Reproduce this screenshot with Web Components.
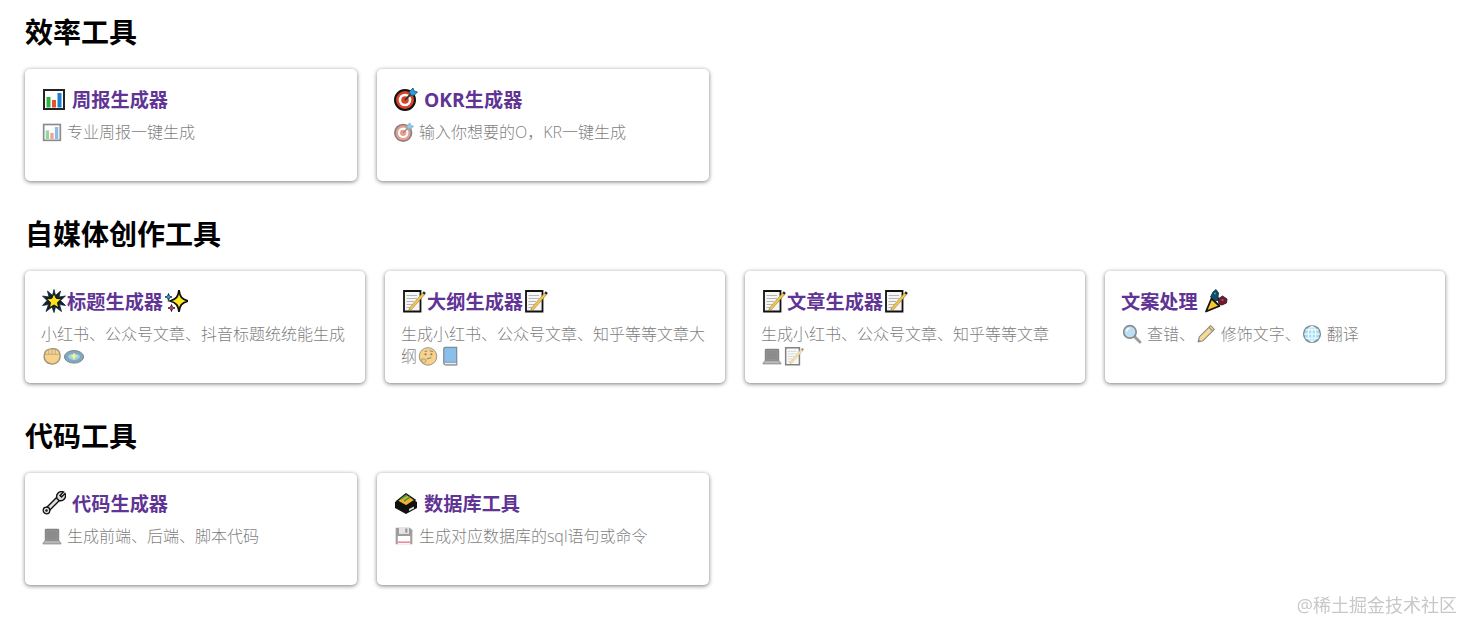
<!DOCTYPE html>
<html lang="zh">
<head>
<meta charset="utf-8">
<title>工具</title>
<style>
    html, body { margin: 0; background: #fff; }
    body { font-family: "Open Sans", "Noto Sans CJK SC", sans-serif; overflow: hidden; height: 622px; }
</style>
</head>
<body>
<tool-page>
    <tool-section title="效率工具" card-width="332px">
        <tool-card>
            <span slot="title"><tool-icon name="chart"></tool-icon> 周报生成器</span>
            <tool-icon name="chart"></tool-icon> 专业周报一键生成
        </tool-card>
        <tool-card>
            <span slot="title"><tool-icon name="target"></tool-icon> OKR生成器</span>
            <tool-icon name="target"></tool-icon> 输入你想要的O，KR一键生成
        </tool-card>
    </tool-section>
    <tool-section title="自媒体创作工具" card-width="340px">
        <tool-card>
            <span slot="title"><tool-icon name="star"></tool-icon>标题生成器<tool-icon name="sparkles"></tool-icon></span>
            小红书、公众号文章、抖音标题统统能生成<tool-icon name="fist"></tool-icon><tool-icon name="galaxy"></tool-icon>
        </tool-card>
        <tool-card>
            <span slot="title"><tool-icon name="memo"></tool-icon>大纲生成器<tool-icon name="memo"></tool-icon></span>
            生成小红书、公众号文章、知乎等等文章大纲<tool-icon name="thinking"></tool-icon><tool-icon name="book"></tool-icon>
        </tool-card>
        <tool-card>
            <span slot="title"><tool-icon name="memo"></tool-icon>文章生成器<tool-icon name="memo"></tool-icon></span>
            生成小红书、公众号文章、知乎等等文章 <tool-icon name="laptop"></tool-icon><tool-icon name="memo"></tool-icon>
        </tool-card>
        <tool-card>
            <span slot="title">文案处理 <tool-icon name="party"></tool-icon></span>
            <tool-icon name="search"></tool-icon> 查错、<tool-icon name="pencil"></tool-icon> 修饰文字、<tool-icon name="globe"></tool-icon> 翻译
        </tool-card>
    </tool-section>
    <tool-section title="代码工具" card-width="332px">
        <tool-card>
            <span slot="title"><tool-icon name="wrench"></tool-icon> 代码生成器</span>
            <tool-icon name="laptop"></tool-icon> 生成前端、后端、脚本代码
        </tool-card>
        <tool-card>
            <span slot="title"><tool-icon name="box"></tool-icon> 数据库工具</span>
            <tool-icon name="floppy"></tool-icon> 生成对应数据库的sql语句或命令
        </tool-card>
    </tool-section>
</tool-page>
<water-mark>@稀土掘金技术社区</water-mark>

<script>
const ICONS = {
    chart: `<rect x="2" y="3" width="20" height="19" fill="#fff" stroke="#222" stroke-width="2"/>
            <rect x="4.5" y="10" width="4" height="10.5" fill="#2fb344"/><rect x="10" y="13" width="4" height="7.5" fill="#e8512f"/><rect x="15.5" y="6" width="4" height="14.5" fill="#1f7fd0"/>`,
    target: `<circle cx="11" cy="13" r="10" fill="#d8432a" stroke="#111" stroke-width="2"/>
            <circle cx="11" cy="13" r="6.3" fill="#fff"/><circle cx="11" cy="13" r="3.8" fill="#d8432a"/>
            <path d="M11 13 19 5" stroke="#333" stroke-width="1.800"/><path d="M15.500 4.500 19 1 20 4 23.500 5 20 8.500 16.500 8Z" fill="#2a9fe0" stroke="#14506f" stroke-width=".8"/>`,
    star: `<path d="M12 .5 13.500 6.500 18.500 2 17 8 23.500 7 18.500 11.500 23.500 16.500 17.500 15.500 19.500 22.500 13.500 18 12 23.500 10 18 4 22.500 6.500 15.500 .5 16.500 5 11.500 .5 7 7 8 5.500 2 10.500 6.500Z" fill="#123" stroke="#0d2a2e" stroke-width=".8"/>
            <path d="M12 4.500 14.200 9.300 19.500 10 15.500 13.500 16.600 18.800 12 16 7.400 18.800 8.500 13.500 4.500 10 9.800 9.300Z" fill="#ffe11a" stroke="#111" stroke-width="1"/>`,
    sparkles: `<path d="M15 1C16 8 17.500 10 24 12 17.500 14 16 16 15 23 14 16 12.500 14 6 12 12.500 10 14 8 15 1Z" fill="#ffe81f" stroke="#111" stroke-width="1.700"/>
            <path d="M4.500 4.500C5 7 5.500 7.500 8 8 5.500 8.500 5 9 4.500 11.500 4 9 3.500 8.500 1 8 3.500 7.500 4 7 4.500 4.500Z" fill="#2aa7dc" stroke="#123" stroke-width=".9"/>
            <path d="M7.500 15.500C8 18 8.500 18.500 11 19 8.500 19.500 8 20 7.500 22.500 7 20 6.500 19.500 4 19 6.500 18.500 7 18 7.500 15.500Z" fill="#b5487e" stroke="#311" stroke-width=".9"/>`,
    memo: `<path d="M2 2H18.500V22.500H2Z" fill="#f5f5f5" stroke="#111" stroke-width="1.800"/>
            <path d="M4.500 6.500H15M4.500 9.500H15M4.500 12.500H12M4.500 15.500H10M4.500 18.500H8" stroke="#b5b5b5" stroke-width="1.200"/>
            <path d="M7.500 19 20.500 4 22.500 5.700 9.500 20.500 6.800 21.300Z" fill="#f4c64f" stroke="#8a6a20" stroke-width=".5"/>
            <path d="M20.500 4 21.800 2.300 23.800 4 22.500 5.700Z" fill="#222"/>`,
    party: `<path d="M2 22.500 7.500 9.500 15.500 17Z" fill="#f8c92d" stroke="#111" stroke-width="1.800" stroke-linejoin="round"/>
            <path d="M6.500 8 9 3 12 .5 14.500 4 14 8 16 11 11 12Z" fill="#0d4f66" stroke="#0a2730" stroke-width=".8"/>
            <path d="M14 10 18.500 7 23 10 22.500 14 18 16 15 15Z" fill="#6d1d33" stroke="#2a0a12" stroke-width=".8"/>
            <circle cx="11" cy="4.500" r="1" fill="#2aa7dc"/><circle cx="18.500" cy="11" r="1" fill="#d04a7a"/>`,
    search: `<path d="M14 14 21.500 21.500" stroke="#444" stroke-width="3.500" stroke-linecap="round"/>
            <circle cx="9.500" cy="9.500" r="7.500" fill="#7fc3ec" stroke="#222" stroke-width="2"/>
            <path d="M5.500 9A4.500 4.500 0 0 1 9 5" stroke="#fff" stroke-width="1.500" fill="none"/>`,
    pencil: `<path d="M2.500 21.500 4 15.500 17.500 2 22 6.500 8.500 20Z" fill="#f2b733" stroke="#222" stroke-width="1.300" stroke-linejoin="round"/>
            <path d="M15.500 4 20 8.500" stroke="#222" stroke-width="1.300"/><path d="M2.500 21.500 3.300 18.300 5.700 20.700Z" fill="#222"/>`,
    globe: `<circle cx="12" cy="12" r="10" fill="#4fc6ea" stroke="#123" stroke-width="1.800"/>
            <g fill="none" stroke="#fff" stroke-width="1.200"><ellipse cx="12" cy="12" rx="4.500" ry="9.500"/><path d="M12 2.500V21.500M2.500 12H21.500M4 7H20M4 17H20"/></g>`,
    wrench: `<path d="M4.500 19.500 17.500 6.500" stroke="#111" stroke-width="5.500" stroke-linecap="round"/>
            <path d="M4.500 19.500 17.500 6.500" stroke="#ddd" stroke-width="2.800" stroke-linecap="round"/>
            <path d="M23 2.500 19.500 6 18 4.500 21.500 1A5 5 0 0 0 15 7.500 L17 9.500A5 5 0 0 0 23 2.500Z" fill="#ddd" stroke="#111" stroke-width="1.400"/>
            <circle cx="4.500" cy="19.500" r="3.300" fill="#ddd" stroke="#111" stroke-width="1.300"/>
            <circle cx="4.500" cy="19.500" r="1.200" fill="#111"/>`,
    box: `<path d="M1 11 12 5 23 11V17L12 23 1 17Z" fill="#111"/>
            <path d="M3 10 12 3 21 9 12 15Z" fill="#f0b22c" stroke="#111" stroke-width="1.500"/>
            <path d="M7 8 13 4M10 10 16 6" stroke="#3f9e44" stroke-width="1.600"/><path d="M15 18 20 15.500V17.500L15 20Z" fill="#ddd"/>`,
    floppy: `<path d="M2 2H19L22 5V22H2Z" fill="#444"/><rect x="6" y="2" width="12" height="7.500" fill="#ccc"/>
            <rect x="13.500" y="3" width="2.500" height="5" fill="#333"/><rect x="4.500" y="12" width="15" height="10" fill="#fff"/><rect x="4.500" y="18.500" width="15" height="2" fill="#d91f44"/>`,
    laptop: `<rect x="4" y="4" width="16" height="13.500" rx="1" fill="#333" stroke="#111" stroke-width="1.300"/><rect x="5.800" y="5.800" width="12.400" height="10" fill="#222"/>
            <path d="M3.500 17.500H20.500L23 21.500H1Z" fill="#777" stroke="#222" stroke-width="1"/>`,
    fist: `<path d="M4 7C6 3 15 2.500 18.500 4.500 21.500 6.500 22.500 12 21 16 19.500 20 14.500 22 10.500 21.500 6 20.500 3 17.500 2.500 13 2.300 11 3 9 4 7Z" fill="#f2aa1f" stroke="#4a3208" stroke-width="1.700"/>
            <path d="M8 4.500V10M12 3.500V10M16 4V10M3.500 10H20" stroke="#7c5610" stroke-width="1" fill="none"/>`,
    galaxy: `<ellipse cx="12" cy="13" rx="11.500" ry="7.500" fill="#0f5a8a" stroke="#012" stroke-width="1.200"/>
            <ellipse cx="12" cy="13" rx="7" ry="3.800" fill="#47aacb"/><path d="M12 8 14 11 17 12 14 13 12 17 10 13 7 12 10 11Z" fill="#f7e02a"/>`,
    thinking: `<circle cx="12" cy="12.500" r="10.500" fill="#f2aa1f" stroke="#4a3208" stroke-width="1.200"/>
            <circle cx="9" cy="10" r="1.300" fill="#111"/><circle cx="16" cy="10" r="1.300" fill="#111"/>
            <path d="M8 6.500 11 6M14 5.500 18 7M10.500 15.500 16 14" stroke="#111" stroke-width="1.200" fill="none"/>
            <path d="M3.500 16C6 15 8.500 15.500 9.500 17 10 19 8 21.500 6 20.500Z" fill="#e89c18" stroke="#4a3208"/>`,
    book: `<path d="M4.500 3.500A2 2 0 0 1 6.500 1.500H20V22.500H6.500A2 2 0 0 1 4.500 20.500Z" fill="#1f86d8" stroke="#0d2438" stroke-width="1.500"/>
            <path d="M5 19.500H20V22.500H6.500" fill="#ddd" stroke="#0d2438"/>`
};

class ToolIcon extends HTMLElement {
    constructor() {
        super();
        const shadowRoot = this.attachShadow({ mode: 'open' });
        shadowRoot.innerHTML = `
            <style>
                :host { display: inline-block; width: 1.36em; height: 1.25em; vertical-align: -0.22em; }
                svg { display: block; width: 1.25em; height: 1.25em; margin-left: 1px; }
            </style>
            <svg viewBox="0 0 24 24" aria-hidden="true">${ICONS[this.getAttribute('name')]}</svg>
        `;
    }
}
window.customElements.define('tool-icon', ToolIcon);

class ToolCard extends HTMLElement {
    constructor() {
        super();
        const shadowRoot = this.attachShadow({ mode: 'open' });
        shadowRoot.innerHTML = `
            <style>
                :host {
                    display: block;
                    box-sizing: border-box;
                    height: 112px;
                    padding: 16px;
                    background: #fff;
                    border-radius: 5px;
                    box-shadow: 0 1px 4px rgba(0, 0, 0, .52);
                }
                .title { font-size: 19.2px; font-weight: 700; line-height: 29px; color: #603494; white-space: nowrap; }
                .desc { margin-top: 7px; font-size: 16px; font-weight: 300; line-height: 22px; color: #000; opacity: .52; }
            </style>
            <div class="title"><slot name="title"></slot></div>
            <div class="desc"><slot></slot></div>
        `;
    }
}
window.customElements.define('tool-card', ToolCard);

class ToolSection extends HTMLElement {
    constructor() {
        super();
        const shadowRoot = this.attachShadow({ mode: 'open' });
        shadowRoot.innerHTML = `
            <style>
                :host { display: block; margin-bottom: 32px; }
                h2 { margin: 0 0 15px; font-size: 28px; font-weight: 700; line-height: 43px; color: #000; }
                .cards { display: grid; grid-auto-flow: column; justify-content: start; gap: 20px; }
            </style>
            <h2>${this.getAttribute('title')}</h2>
            <div class="cards" style="grid-auto-columns: ${this.getAttribute('card-width')}"><slot></slot></div>
        `;
    }
}
window.customElements.define('tool-section', ToolSection);

class ToolPage extends HTMLElement {
    constructor() {
        super();
        const shadowRoot = this.attachShadow({ mode: 'open' });
        shadowRoot.innerHTML = `
            <style>
                :host { display: block; padding: 11px 18px 0 25px; }
            </style>
            <slot></slot>
        `;
    }
}
window.customElements.define('tool-page', ToolPage);

class WaterMark extends HTMLElement {
    constructor() {
        super();
        const shadowRoot = this.attachShadow({ mode: 'open' });
        shadowRoot.innerHTML = `
            <style>
                :host { position: fixed; right: 6px; bottom: 5px; font-size: 18px; line-height: 24px; color: #c8c8c8; white-space: nowrap; }
            </style>
            <slot></slot>
        `;
    }
}
window.customElements.define('water-mark', WaterMark);
</script>
</body>
</html>
